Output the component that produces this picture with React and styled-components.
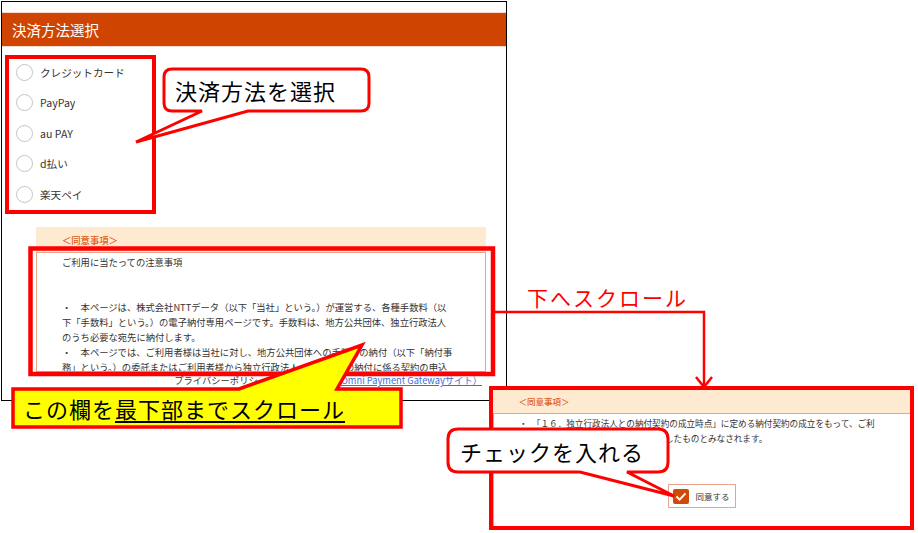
import React from 'react';
import styled, { createGlobalStyle } from 'styled-components';

const GlobalStyle = createGlobalStyle`
  html, body {
    margin: 0;
    padding: 0;
    background: #fff;
  }
  body {
    font-family: "Noto Sans CJK JP", "Noto Sans", sans-serif;
  }
`;

const Canvas = styled.div`
  position: relative;
  width: 918px;
  height: 533px;
  overflow: hidden;
  background: #fff;
`;

/* left screenshot */
const Shot = styled.div`
  position: absolute;
  left: 1px;
  top: 1px;
  width: 506px;
  height: 400px;
  box-sizing: border-box;
  border: 1px solid #000;
  background: #fff;
  display: flex;
  flex-direction: column;
`;

const Header = styled.div`
  margin-top: 10px;
  height: 33px;
  border-top: 1px solid #f5dccf;
  border-bottom: 1px solid #f5dccf;
  background: #cf4400;
  color: #fff;
  font-size: 14.5px;
  display: flex;
  align-items: center;
  padding-left: 10px;
`;

const RadioList = styled.div`
  margin-top: 10px;
  padding-left: 14px;
  display: flex;
  flex-direction: column;
`;

const RadioRow = styled.label`
  height: 30.5px;
  display: flex;
  align-items: center;
  gap: 7px;
`;

const RadioCircle = styled.span`
  width: 17px;
  height: 17px;
  box-sizing: border-box;
  border: 1px solid #c4c4c4;
  border-radius: 50%;
  background: #fff;
`;

const RadioLabel = styled.span`
  font-size: 10.6px;
  color: #333;
`;

const Agreement = styled.div`
  margin: 17.75px 0 0 34px;
  width: 450px;
  display: flex;
  flex-direction: column;
`;

const AgreeHead = styled.div`
  height: ${p => p.$h}px;
  background: #fdead1;
  color: #dd5c1c;
  font-size: ${p => p.$size}px;
  font-weight: 500;
  display: flex;
  align-items: center;
  padding-left: ${p => p.$pad}px;
`;

const NoticeBox = styled.div`
  height: ${p => p.$h}px;
  box-sizing: border-box;
  border: 1px solid #e8a58a;
  background: #fff;
  overflow: hidden;
`;

const NoticeText = styled.div`
  padding: 2px 0 0 25px;
  font-size: ${p => p.$size}px;
  line-height: 15px;
  color: #333;
  white-space: nowrap;
`;

const Privacy = styled.div`
  margin-top: 1px;
  line-height: 15px;
  font-size: 9.3px;
  color: #333;
  text-align: right;
  padding-right: 4px;
  white-space: nowrap;
`;

const Link = styled.a`
  color: #3b6fd6;
  text-decoration: underline;
`;

/* right cropped screenshot */
const Crop = styled.div`
  position: absolute;
  left: 489px;
  top: 386px;
  width: 425px;
  height: 144px;
  box-sizing: border-box;
  border: 4.5px solid #ff0000;
  background: #fff;
  overflow: hidden;
`;

const CropInner = styled.div`
  width: 418px;
  display: flex;
  flex-direction: column;
`;

const AgreeRow = styled.div`
  margin-top: 38.5px;
  display: flex;
  justify-content: center;
`;

const AgreeBox = styled.div`
  height: 24px;
  box-sizing: border-box;
  border: 1px solid #e8a58a;
  padding: 0 5px 0 4px;
  display: flex;
  align-items: center;
  gap: 6px;
`;

const CheckBox = styled.span`
  width: 16px;
  height: 15px;
  border-radius: 2px;
  background: #cf4a08;
  display: flex;
  align-items: center;
  justify-content: center;
`;

const CheckLabel = styled.span`
  font-size: 8.5px;
  color: #333;
`;

/* annotations */
const Overlay = styled.svg`
  position: absolute;
  left: 0;
  top: 0;
  pointer-events: none;
`;

const ScrollNote = styled.div`
  position: absolute;
  left: 527px;
  top: 285px;
  font-size: 21px;
  line-height: 24px;
  letter-spacing: 2px;
  color: #ff0000;
  white-space: nowrap;
`;

const BalloonWrap = styled.div`
  position: absolute;
  left: ${p => p.$x}px;
  top: ${p => p.$y}px;
  width: ${p => p.$w}px;
  height: ${p => p.$h}px;
  box-sizing: border-box;
  padding-left: ${p => p.$pad}px;
  display: flex;
  align-items: center;
`;

const BalloonShape = styled.svg`
  position: absolute;
  left: 0;
  top: 0;
  overflow: visible;
`;

const BalloonText = styled.span`
  position: relative;
  font-size: 22px;
  line-height: 1;
  letter-spacing: 1px;
  color: #000;
  white-space: nowrap;
`;

const Under = styled.span`
  text-decoration: underline;
  text-decoration-thickness: 1.5px;
  text-underline-offset: 3px;
`;

function balloonPath({ w, h, r, side, b1, b2, tx, ty }) {
  if (side === 'top') {
    return `M${r},0 H${b1} L${tx},${ty} L${b2},0 H${w - r} Q${w},0 ${w},${r} V${h - r} Q${w},${h} ${w - r},${h} H${r} Q0,${h} 0,${h - r} V${r} Q0,0 ${r},0 Z`;
  }
  return `M${r},0 H${w - r} Q${w},0 ${w},${r} V${h - r} Q${w},${h} ${w - r},${h} H${b2} L${tx},${ty} L${b1},${h} H${r} Q0,${h} 0,${h - r} V${r} Q0,0 ${r},0 Z`;
}

function Balloon({ x, y, w, h, r, side, b1, b2, tx, ty, fill, stroke, pad, children }) {
  return (
    <BalloonWrap $x={x} $y={y} $w={w} $h={h} $pad={pad}>
      <BalloonShape width={w} height={h}>
        <path
          d={balloonPath({ w, h, r, side, b1, b2, tx, ty })}
          fill={fill}
          stroke="#ff0000"
          strokeWidth={stroke}
        />
      </BalloonShape>
      <BalloonText>{children}</BalloonText>
    </BalloonWrap>
  );
}

const methods = ['クレジットカード', 'PayPay', 'au PAY', 'd払い', '楽天ペイ'];

export default function App() {
  return (
    <Canvas>
      <GlobalStyle />

      <Shot>
        <Header>決済方法選択</Header>
        <RadioList>
          {methods.map(m => (
            <RadioRow key={m}>
              <RadioCircle />
              <RadioLabel>{m}</RadioLabel>
            </RadioRow>
          ))}
        </RadioList>
        <Agreement>
          <AgreeHead $h={25} $size={9.3} $pad={26}>＜同意事項＞</AgreeHead>
          <NoticeBox $h={120}>
            <NoticeText $size={9.3}>
              ご利用に当たっての注意事項<br />
              <br />
              <br />
              ・　本ページは、株式会社NTTデータ（以下「当社」という。）が運営する、各種手数料（以<br />
              下「手数料」という。）の電子納付専用ページです。手数料は、地方公共団体、独立行政法人<br />
              のうち必要な宛先に納付します。<br />
              ・　本ページでは、ご利用者様は当社に対し、地方公共団体への手数料の納付（以下「納付事<br />
              務」という。）の委託またはご利用者様から独立行政法人への手数料の納付に係る契約の申込<br />
              みを行うものとします。
            </NoticeText>
          </NoticeBox>
          <Privacy>
            プライバシーポリシー（詳細については
            <Link href="#">Omni Payment Gatewayサイト）</Link>
          </Privacy>
        </Agreement>
      </Shot>

      <Crop>
        <CropInner>
          <AgreeHead $h={22.5} $size={8.5} $pad={25.5}>＜同意事項＞</AgreeHead>
          <NoticeBox $h={114}>
            <NoticeText $size={8.6}>
              ・　「１６．独立行政法人との納付契約の成立時点」に定める納付契約の成立をもって、ご利<br />
              用者様と独立行政法人との契約が成立したものとみなされます。
            </NoticeText>
            <AgreeRow>
              <AgreeBox>
                <CheckBox>
                  <svg width="12" height="11" viewBox="0 0 12 11">
                    <path d="M1.5 5.5 L4.6 8.6 L10.5 2.4" fill="none" stroke="#fff" strokeWidth="2" />
                  </svg>
                </CheckBox>
                <CheckLabel>同意する</CheckLabel>
              </AgreeBox>
            </AgreeRow>
          </NoticeBox>
        </CropInner>
      </Crop>

      <Overlay width="918" height="533" viewBox="0 0 918 533">
        <rect x="7" y="57" width="147" height="155" fill="none" stroke="#ff0000" strokeWidth="4" />
        <rect x="30.5" y="248.5" width="462.5" height="125.5" fill="none" stroke="#ff0000" strokeWidth="4.5" />
        <path d="M495 312 H704 V386" fill="none" stroke="#ff0000" strokeWidth="2.5" />
        <path d="M696 377 L704 387 L712 377" fill="none" stroke="#ff0000" strokeWidth="2.5" />
      </Overlay>

      <ScrollNote>下へスクロール</ScrollNote>

      <Balloon x={164} y={69} w={205} h={42} r={8} b1={38} b2={84} tx={-28} ty={73} fill="#fff" stroke={3} pad={11}>
        決済方法を選択
      </Balloon>

      <Balloon x={13} y={389} w={388} h={38} r={0} side="top" b1={226} b2={324} tx={349} ty={-44} fill="#ffff00" stroke={3.5} pad={10}>
        この欄を<Under>最下部までスクロール</Under>
      </Balloon>

      <Balloon x={448} y={429} w={220} h={43} r={10} b1={132} b2={179} tx={226} ty={67} fill="#fff" stroke={3} pad={12}>
        チェックを入れる
      </Balloon>
    </Canvas>
  );
}
